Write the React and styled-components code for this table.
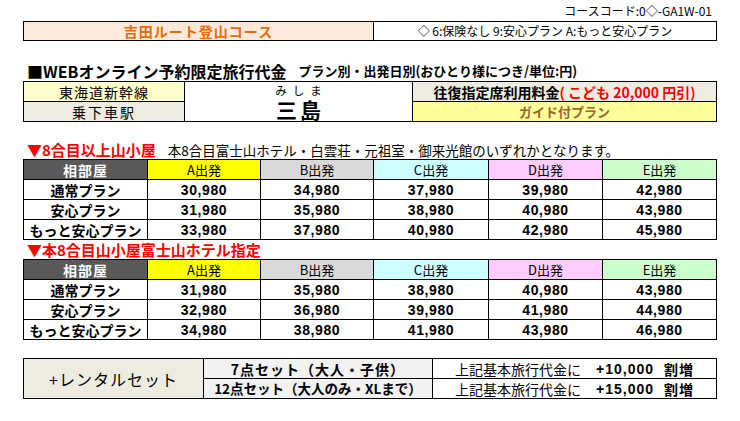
import React from "react";
import styled, { createGlobalStyle } from "styled-components";

const GlobalStyle = createGlobalStyle`
  body {
    margin: 0;
    background: #fff;
    font-family: "Noto Sans CJK JP", "Liberation Sans", sans-serif;
    color: #000;
  }
`;

const Page = styled.div`
  width: 740px;
  padding: 0 23px;
  box-sizing: border-box;
  display: flex;
  flex-direction: column;
`;

const CourseCode = styled.div`
  height: 21px;
  padding-right: 5px;
  text-align: right;
  font-size: 12px;
  line-height: 22px;
`;

const Grid = styled.div`
  display: grid;
  grid-template-columns: ${(p) => p.$cols};
  grid-auto-rows: ${(p) => p.$rowH || 19}px;
  gap: 1px;
  padding: 1px;
  background: #000;
  margin-top: ${(p) => p.$top || 0}px;
`;

const Cell = styled.div`
  background: ${(p) => p.$bg || "#fff"};
  color: ${(p) => p.$color || "#000"};
  font-size: ${(p) => p.$size || 13}px;
  font-weight: ${(p) => (p.$bold ? 700 : 400)};
  display: flex;
  align-items: center;
  justify-content: center;
  white-space: nowrap;
  overflow: hidden;
  line-height: 1;
  grid-row: ${(p) => p.$row || "auto"};
  grid-column: ${(p) => p.$col || "auto"};
  letter-spacing: ${(p) => p.$ls || 0}px;
`;

const Title = styled.div`
  margin-top: 18px;
  height: 22px;
  display: flex;
  align-items: flex-end;
  padding-left: 4px;
  font-weight: 700;
  font-size: 16px;
  line-height: 20px;
  white-space: nowrap;
`;

const TitleSub = styled.span`
  font-size: 13px;
  margin-left: 12px;
`;

const StationCell = styled.div`
  grid-row: 1 / span 2;
  grid-column: 2;
  background: #fff;
  display: flex;
  flex-direction: column;
  align-items: center;
  justify-content: flex-start;
  padding-top: 2px;
`;

const Kana = styled.span`
  display: block;
  height: 13px;
  font-size: 11.5px;
  line-height: 13px;
  letter-spacing: 6px;
  margin-left: 6px;
`;

const Kanji = styled.span`
  display: block;
  height: 22px;
  font-size: 21px;
  line-height: 22px;
  font-weight: 700;
  letter-spacing: 3px;
  margin-left: 3px;
  margin-top: 1px;
`;

const Red = styled.span`
  color: #ff0000;
`;

const Heading = styled.div`
  height: 19px;
  margin-top: ${(p) => p.$top || 0}px;
  display: flex;
  align-items: flex-end;
  padding-left: 4px;
  white-space: nowrap;
  line-height: 18px;
`;

const HeadRed = styled.span`
  color: #ff0000;
  font-weight: 700;
  font-size: 15px;
`;

const HeadNote = styled.span`
  font-size: 13.5px;
  margin-left: 12px;
`;

const Num = styled(Cell)`
  font-family: "Liberation Sans", sans-serif;
  font-weight: 700;
  font-size: 14px;
  letter-spacing: 0.6px;
`;

const Extra = styled.b`
  margin-left: 15px;
  font-family: "Liberation Sans", sans-serif;
  letter-spacing: 1px;
`;

const Zou = styled.b`
  margin-left: 10px;
  letter-spacing: 1px;
`;

const cols = "123px 112px 112px 114px 113px 1fr";

const heads = [
  { label: "A出発", bg: "#ffff00" },
  { label: "B出発", bg: "#d9d9d9" },
  { label: "C出発", bg: "#ccffff" },
  { label: "D出発", bg: "#ffccff" },
  { label: "E出発", bg: "#ccffcc" },
];

const PriceTable = ({ rows, top }) => (
  <Grid $cols={cols} $top={top}>
    <Cell $bg="#595959" $color="#fff" $bold $size={14} $ls={1}>相部屋</Cell>
    {heads.map((h) => (
      <Cell key={h.label} $bg={h.bg} $size={13}>{h.label}</Cell>
    ))}
    {rows.map((r) => (
      <React.Fragment key={r.name}>
        <Cell $bold $size={14}>{r.name}</Cell>
        {r.prices.map((p, i) => (
          <Num key={i}>{p}</Num>
        ))}
      </React.Fragment>
    ))}
  </Grid>
);

const table1 = [
  { name: "通常プラン", prices: ["30,980", "34,980", "37,980", "39,980", "42,980"] },
  { name: "安心プラン", prices: ["31,980", "35,980", "38,980", "40,980", "43,980"] },
  { name: "もっと安心プラン", prices: ["33,980", "37,980", "40,980", "42,980", "45,980"] },
];

const table2 = [
  { name: "通常プラン", prices: ["31,980", "35,980", "38,980", "40,980", "43,980"] },
  { name: "安心プラン", prices: ["32,980", "36,980", "39,980", "41,980", "44,980"] },
  { name: "もっと安心プラン", prices: ["34,980", "38,980", "41,980", "43,980", "46,980"] },
];

export default function App() {
  return (
    <>
      <GlobalStyle />
      <Page>
        <CourseCode>コースコード:0◇-GA1W-01</CourseCode>
        <Grid $cols="349px 1fr" $rowH={18}>
          <Cell $bg="#fde9d9" $color="#e46c0a" $bold $size={14} $ls={1}>吉田ルート登山コース</Cell>
          <Cell $size={12}>◇ 6:保険なし 9:安心プラン A:もっと安心プラン</Cell>
        </Grid>

        <Title>
          ■WEBオンライン予約限定旅行代金
          <TitleSub>プラン別・出発日別(おひとり様につき/単位:円)</TitleSub>
        </Title>

        <Grid $cols="160px 227px 1fr">
          <Cell $bg="#ffffcc" $size={14} $ls={1} $col={1}>東海道新幹線</Cell>
          <StationCell>
            <Kana>みしま</Kana>
            <Kanji>三島</Kanji>
          </StationCell>
          <Cell $bg="#eeece1" $bold $size={14} $col={3}>
            往復指定席利用料金<Red>( こども 20,000 円引)</Red>
          </Cell>
          <Cell $bg="#eeece1" $size={14} $ls={2} $col={1}>乗下車駅</Cell>
          <Cell $bg="#ffff99" $color="#996633" $bold $size={13} $col={3}>ガイド付プラン</Cell>
        </Grid>

        <Heading $top={18}>
          <HeadRed>▼8合目以上山小屋</HeadRed>
          <HeadNote>本8合目富士山ホテル・白雲荘・元祖室・御来光館のいずれかとなります。</HeadNote>
        </Heading>
        <PriceTable rows={table1} />

        <Heading>
          <HeadRed>▼本8合目山小屋富士山ホテル指定</HeadRed>
        </Heading>
        <PriceTable rows={table2} />

        <Grid $cols="179px 228px 1fr" $top={18}>
          <Cell $bg="#eeece1" $size={16} $row="1 / span 2" $ls={1}>+レンタルセット</Cell>
          <Cell $bg="#f2f2f2" $bold $size={14} $ls={1}>7点セット（大人・子供）</Cell>
          <Cell $size={14}>上記基本旅行代金に<Extra>+10,000</Extra><Zou>割増</Zou></Cell>
          <Cell $bg="#f2f2f2" $bold $size={13.5}>12点セット（大人のみ・XLまで）</Cell>
          <Cell $size={14}>上記基本旅行代金に<Extra>+15,000</Extra><Zou>割増</Zou></Cell>
        </Grid>
      </Page>
    </>
  );
}
